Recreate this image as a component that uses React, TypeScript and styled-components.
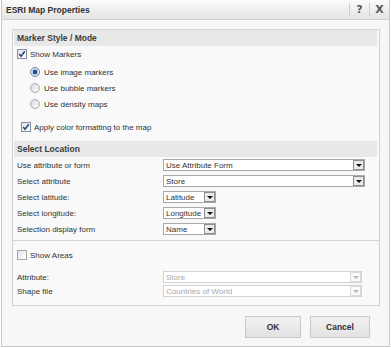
import React from 'react';
import styled, { createGlobalStyle } from 'styled-components';

const Global = createGlobalStyle`
  html, body { margin: 0; padding: 0; background: #ffffff; }
  body { font-family: "Liberation Sans", Arial, sans-serif; font-size: 8px; color: #333333; }
  * { box-sizing: border-box; }
`;

const Dialog = styled.div`
  width: 389px;
  height: 347px;
  margin: 0 1px;
  border: 1px solid #c9c9c9;
  border-top: none;
  background: #f7f7f7;
  display: flex;
  flex-direction: column;
`;

const TitleBar = styled.div`
  height: 20px;
  display: flex;
  align-items: center;
  padding-left: 4px;
  background: linear-gradient(#fbfbfb, #e4e4e4);
  border-bottom: 1px solid #d2d2d2;
`;

const Title = styled.div`
  flex: 1;
  font-weight: bold;
  font-size: 8.5px;
  color: #333;
`;

const TitleButton = styled.div`
  width: 20px;
  height: 13px;
  border-left: 1px solid #cfcfcf;
  display: flex;
  align-items: center;
  justify-content: center;
  font-family: "DejaVu Sans", sans-serif;
  font-weight: bold;
  font-size: 11px;
  color: #5a5a5a;
`;

const Content = styled.div`
  flex: 1;
  padding: 9px 9px 0 10px;
  display: flex;
  flex-direction: column;
`;

const Box = styled.div`
  border: 1px solid #d3d3d3;
  background: #f9f9f9;
  height: 277px;
  display: flex;
  flex-direction: column;
`;

const Header = styled.div<{ $top?: number }>`
  height: 16px;
  margin: ${p => p.$top ?? 0}px 2px 0 1px;
  background: #e8e8e8;
  display: flex;
  align-items: center;
  padding-left: 3px;
  font-weight: bold;
  font-size: 8.5px;
  color: #3c3c3c;
`;

const CheckRow = styled.label<{ $indent: number; $h?: number; $top?: number }>`
  height: ${p => p.$h ?? 16}px;
  margin-top: ${p => p.$top ?? 0}px;
  display: flex;
  align-items: center;
  gap: 3px;
  padding-left: ${p => p.$indent}px;
`;

const CheckBoxEl = styled.span<{ $on?: boolean }>`
  width: 10px;
  height: 10px;
  border: 1px solid ${p => (p.$on ? '#7f8fa6' : '#a4a4a4')};
  background: linear-gradient(135deg, #e4e4e4, #ffffff);
  display: flex;
  align-items: center;
  justify-content: center;
`;

const RadioEl = styled.span<{ $on?: boolean }>`
  width: 10px;
  height: 10px;
  border-radius: 50%;
  border: 1px solid ${p => (p.$on ? '#6f85a3' : '#a8a8a8')};
  background: ${p => (p.$on ? 'radial-gradient(circle, #1e4f86 0 2px, #a9c6e6 2.5px, #e6eef7 4px)' : 'linear-gradient(135deg, #dcdcdc, #fafafa)')};
  margin-right: 1px;
`;

const RadioGroup = styled.div`
  margin-top: 2px;
  display: flex;
  flex-direction: column;
`;

const FormRow = styled.div<{ $h?: number }>`
  height: ${p => p.$h ?? 16}px;
  display: flex;
  align-items: center;
  padding-left: 4px;
`;

const Label = styled.div`
  width: 146px;
`;

const SelectBox = styled.div<{ $w: number; $disabled?: boolean }>`
  width: ${p => p.$w}px;
  height: 12px;
  border: 1px solid ${p => (p.$disabled ? '#d2d2d2' : '#a9a9a9')};
  background: #fff;
  display: flex;
  align-items: center;
  padding-left: 2px;
  color: ${p => (p.$disabled ? '#a8a8a8' : '#333')};
`;

const SelectText = styled.span`
  flex: 1;
  white-space: nowrap;
  overflow: hidden;
`;

const DropBtn = styled.span<{ $disabled?: boolean }>`
  width: 11px;
  height: 10px;
  border: 1px solid ${p => (p.$disabled ? '#dadada' : '#8d8d8d')};
  background: ${p => (p.$disabled ? '#fafafa' : '#ececec')};
  display: flex;
  align-items: center;
  justify-content: center;
`;

const Arrow = styled.span<{ $disabled?: boolean }>`
  width: 0;
  height: 0;
  border-left: 3px solid transparent;
  border-right: 3px solid transparent;
  border-top: 3px solid ${p => (p.$disabled ? '#b8b8b8' : '#111')};
`;

const Divider = styled.div`
  margin-top: 3px;
  border-top: 1px solid #d3d3d3;
  padding-top: 6px;
  display: flex;
  flex-direction: column;
`;

const Rows = styled.div<{ $top?: number }>`
  margin-top: ${p => p.$top ?? 0}px;
  display: flex;
  flex-direction: column;
`;

const Buttons = styled.div`
  margin-top: 10px;
  padding-right: 10px;
  display: flex;
  justify-content: flex-end;
  gap: 9px;
`;

const Button = styled.button<{ $w: number }>`
  width: ${p => p.$w}px;
  height: 22px;
  border: 1px solid #c8c8c8;
  background: linear-gradient(#f2f2f2, #e2e2e2);
  font-family: "Liberation Sans", Arial, sans-serif;
  font-weight: bold;
  font-size: 8.5px;
  color: #333;
  padding: 0;
`;

const Check = () => (
  <svg width="8" height="8" viewBox="0 0 8 8">
    <path d="M1.2 4 L3 6.3 L6.8 1.2" fill="none" stroke="#24457a" strokeWidth="1.5" />
  </svg>
);

const Select = ({ w, text, disabled }: { w: number; text: string; disabled?: boolean }) => (
  <SelectBox $w={w} $disabled={disabled}>
    <SelectText>{text}</SelectText>
    <DropBtn $disabled={disabled}>
      <Arrow $disabled={disabled} />
    </DropBtn>
  </SelectBox>
);

export default function App() {
  return (
    <>
      <Global />
      <Dialog>
        <TitleBar>
          <Title>ESRI Map Properties</Title>
          <TitleButton>?</TitleButton>
          <TitleButton>X</TitleButton>
        </TitleBar>
        <Content>
          <Box>
            <Header>Marker Style / Mode</Header>
            <CheckRow $indent={4}>
              <CheckBoxEl $on><Check /></CheckBoxEl>
              Show Markers
            </CheckRow>
            <RadioGroup>
              <CheckRow $indent={17}><RadioEl $on />Use image markers</CheckRow>
              <CheckRow $indent={17}><RadioEl />Use bubble markers</CheckRow>
              <CheckRow $indent={17}><RadioEl />Use density maps</CheckRow>
            </RadioGroup>
            <CheckRow $indent={8} $top={7}>
              <CheckBoxEl $on><Check /></CheckBoxEl>
              Apply color formatting to the map
            </CheckRow>
            <Header $top={6}>Select Location</Header>
            <Rows>
              <FormRow><Label>Use attribute or form</Label><Select w={202} text="Use Attribute Form" /></FormRow>
              <FormRow><Label>Select attribute</Label><Select w={202} text="Store" /></FormRow>
              <FormRow><Label>Select latitude:</Label><Select w={53} text="Latitude" /></FormRow>
              <FormRow><Label>Select longitude:</Label><Select w={53} text="Longitude" /></FormRow>
              <FormRow><Label>Selection display form</Label><Select w={53} text="Name" /></FormRow>
            </Rows>
            <Divider>
              <CheckRow $indent={4}>
                <CheckBoxEl />
                Show Areas
              </CheckRow>
              <Rows $top={7}>
                <FormRow $h={14}><Label>Attribute:</Label><Select w={199} text="Store" disabled /></FormRow>
                <FormRow $h={14}><Label>Shape file</Label><Select w={199} text="Countries of World" disabled /></FormRow>
              </Rows>
            </Divider>
          </Box>
          <Buttons>
            <Button $w={56}>OK</Button>
            <Button $w={60}>Cancel</Button>
          </Buttons>
        </Content>
      </Dialog>
    </>
  );
}
